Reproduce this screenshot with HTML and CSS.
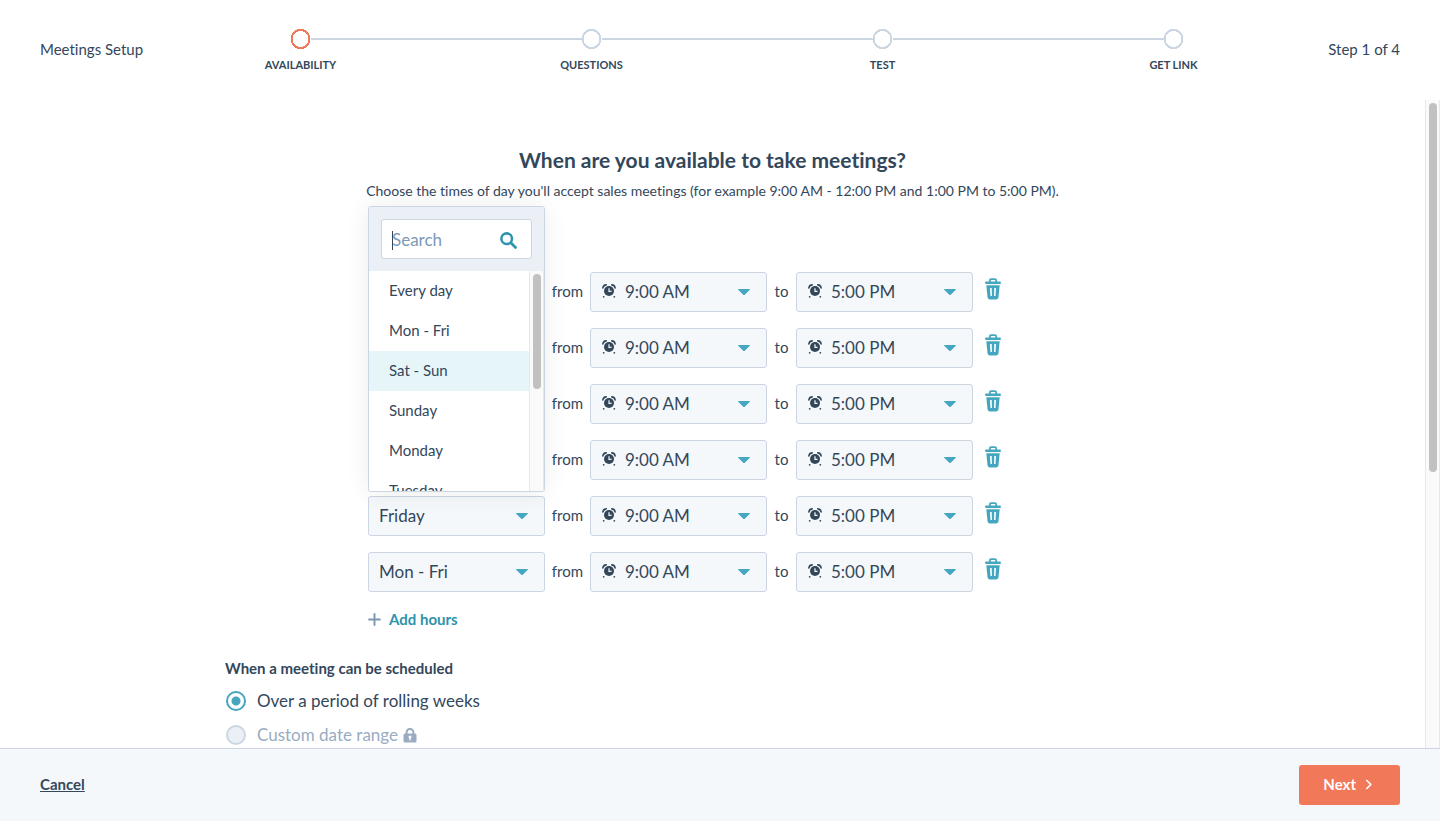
FILE: index.html
```html
<!DOCTYPE html>
<html lang="en">
<head>
<meta charset="utf-8">
<meta name="viewport" content="width=device-width, initial-scale=1">
<title>Meetings Setup</title>
<link rel="stylesheet" href="styles.css">
</head>
<body>
<svg class="sprite" aria-hidden="true">
  <symbol id="clock" viewBox="0 0 14 14">
    <circle cx="7" cy="7" r="5" fill="currentColor"/>
    <path d="M.9 4C1.100 2.200 2.400 1 4.200.9M13.100 4C12.900 2.200 11.600 1 9.800.9" fill="none" stroke="currentColor" stroke-width="1.600" stroke-linecap="round"/>
    <path d="M7 4.200v3.200h2.600" fill="none" stroke="#f5f8fa" stroke-width="1.200"/>
    <circle cx="1.700" cy="12.800" r=".9" fill="currentColor"/><circle cx="12.300" cy="12.800" r=".9" fill="currentColor"/>
  </symbol>
  <symbol id="caret" viewBox="0 0 12 6"><path d="M.6 0h10.8c.5 0 .7.5.4.8L7 5.600a1.400 1.400 0 0 1-2 0L.2.8C-.1.5.1 0 .6 0z" fill="currentColor"/></symbol>
  <symbol id="trash" viewBox="0 0 16 22">
    <path d="M4.800 4V2.600A1.400 1.400 0 0 1 6.200 1.200h3.600a1.400 1.400 0 0 1 1.400 1.400V4" fill="none" stroke="currentColor" stroke-width="1.800"/>
    <rect x="0" y="3.400" width="16" height="2.600" rx="1.300" fill="currentColor"/>
    <path fill-rule="evenodd" d="M1.300 7.200h13.400l-1.200 12.100a2.300 2.300 0 0 1-2.300 2.100H4.800a2.300 2.300 0 0 1-2.300-2.100zM5 9.900l.5 8h1.500l-.3-8zm4.300 0-.3 8h1.500l.5-8z" fill="currentColor"/>
  </symbol>
</svg>

<header class="header">
  <span class="header-title">Meetings Setup</span>
  <ol class="steps">
    <li class="step is-active"><span class="dot"></span>Availability</li>
    <li class="step"><span class="dot"></span>Questions</li>
    <li class="step"><span class="dot"></span>Test</li>
    <li class="step"><span class="dot"></span>Get link</li>
  </ol>
  <span class="header-count">Step 1 of 4</span>
</header>

<div class="viewport">
  <main class="content">
    <h1 class="title">When are you available to take meetings?</h1>
    <p class="lead">Choose the times of day you'll accept sales meetings (for example 9:00 AM - 12:00 PM and 1:00 PM to 5:00 PM).</p>

    <form class="form">
      <div class="hours">
        <div class="row">
          <div class="field"><select class="select" aria-label="Day"><option>Monday</option></select><svg class="caret"><use href="#caret"/></svg></div>
          <span class="word word-from">from</span>
          <div class="field"><svg class="clock"><use href="#clock"/></svg><select class="select" aria-label="Start time"><option>9:00 AM</option></select><svg class="caret"><use href="#caret"/></svg></div>
          <span class="word word-to">to</span>
          <div class="field"><svg class="clock"><use href="#clock"/></svg><select class="select" aria-label="End time"><option>5:00 PM</option></select><svg class="caret"><use href="#caret"/></svg></div>
          <button class="remove" type="button" aria-label="Remove hours"><svg class="trash"><use href="#trash"/></svg></button>
        </div>
        <div class="row">
          <div class="field"><select class="select" aria-label="Day"><option>Tuesday</option></select><svg class="caret"><use href="#caret"/></svg></div>
          <span class="word word-from">from</span>
          <div class="field"><svg class="clock"><use href="#clock"/></svg><select class="select" aria-label="Start time"><option>9:00 AM</option></select><svg class="caret"><use href="#caret"/></svg></div>
          <span class="word word-to">to</span>
          <div class="field"><svg class="clock"><use href="#clock"/></svg><select class="select" aria-label="End time"><option>5:00 PM</option></select><svg class="caret"><use href="#caret"/></svg></div>
          <button class="remove" type="button" aria-label="Remove hours"><svg class="trash"><use href="#trash"/></svg></button>
        </div>
        <div class="row">
          <div class="field"><select class="select" aria-label="Day"><option>Wednesday</option></select><svg class="caret"><use href="#caret"/></svg></div>
          <span class="word word-from">from</span>
          <div class="field"><svg class="clock"><use href="#clock"/></svg><select class="select" aria-label="Start time"><option>9:00 AM</option></select><svg class="caret"><use href="#caret"/></svg></div>
          <span class="word word-to">to</span>
          <div class="field"><svg class="clock"><use href="#clock"/></svg><select class="select" aria-label="End time"><option>5:00 PM</option></select><svg class="caret"><use href="#caret"/></svg></div>
          <button class="remove" type="button" aria-label="Remove hours"><svg class="trash"><use href="#trash"/></svg></button>
        </div>
        <div class="row">
          <div class="field"><select class="select" aria-label="Day"><option>Thursday</option></select><svg class="caret"><use href="#caret"/></svg></div>
          <span class="word word-from">from</span>
          <div class="field"><svg class="clock"><use href="#clock"/></svg><select class="select" aria-label="Start time"><option>9:00 AM</option></select><svg class="caret"><use href="#caret"/></svg></div>
          <span class="word word-to">to</span>
          <div class="field"><svg class="clock"><use href="#clock"/></svg><select class="select" aria-label="End time"><option>5:00 PM</option></select><svg class="caret"><use href="#caret"/></svg></div>
          <button class="remove" type="button" aria-label="Remove hours"><svg class="trash"><use href="#trash"/></svg></button>
        </div>
        <div class="row">
          <div class="field">
            <select class="select" aria-label="Day"><option>Friday</option></select><svg class="caret"><use href="#caret"/></svg>
            <div class="menu">
              <div class="menu-head">
                <div class="search">
                  <span class="cursor"></span>
                  <input class="search-input" type="text" placeholder="Search" aria-label="Search">
                  <svg class="search-icon" viewBox="0 0 16 16"><circle cx="6.300" cy="6.300" r="5" fill="none" stroke="currentColor" stroke-width="2.400"/><path d="M10.200 10.200l4.400 4.400" stroke="currentColor" stroke-width="2.600" stroke-linecap="round"/></svg>
                </div>
              </div>
              <div class="menu-body">
                <ul class="options">
                  <li><button class="option" type="button">Every day</button></li>
                  <li><button class="option" type="button">Mon - Fri</button></li>
                  <li><button class="option is-hovered" type="button">Sat - Sun</button></li>
                  <li><button class="option" type="button">Sunday</button></li>
                  <li><button class="option" type="button">Monday</button></li>
                  <li><button class="option" type="button">Tuesday</button></li>
                </ul>
                <div class="track"><div class="thumb thumb-menu"></div></div>
              </div>
            </div>
          </div>
          <span class="word word-from">from</span>
          <div class="field"><svg class="clock"><use href="#clock"/></svg><select class="select" aria-label="Start time"><option>9:00 AM</option></select><svg class="caret"><use href="#caret"/></svg></div>
          <span class="word word-to">to</span>
          <div class="field"><svg class="clock"><use href="#clock"/></svg><select class="select" aria-label="End time"><option>5:00 PM</option></select><svg class="caret"><use href="#caret"/></svg></div>
          <button class="remove" type="button" aria-label="Remove hours"><svg class="trash"><use href="#trash"/></svg></button>
        </div>
        <div class="row">
          <div class="field"><select class="select" aria-label="Day"><option>Mon - Fri</option></select><svg class="caret"><use href="#caret"/></svg></div>
          <span class="word word-from">from</span>
          <div class="field"><svg class="clock"><use href="#clock"/></svg><select class="select" aria-label="Start time"><option>9:00 AM</option></select><svg class="caret"><use href="#caret"/></svg></div>
          <span class="word word-to">to</span>
          <div class="field"><svg class="clock"><use href="#clock"/></svg><select class="select" aria-label="End time"><option>5:00 PM</option></select><svg class="caret"><use href="#caret"/></svg></div>
          <button class="remove" type="button" aria-label="Remove hours"><svg class="trash"><use href="#trash"/></svg></button>
        </div>
        <button class="add" type="button"><svg class="plus" viewBox="0 0 12 12"><path d="M6 1v10M1 6h10" stroke="currentColor" stroke-width="1.800" stroke-linecap="round"/></svg>Add hours</button>
      </div>

      <fieldset class="schedule">
        <legend class="legend">When a meeting can be scheduled</legend>
        <label class="choice"><input class="radio" type="radio" name="window" checked>Over a period of rolling weeks</label>
        <label class="choice is-disabled"><input class="radio" type="radio" name="window" disabled>Custom date range
          <svg class="lock" viewBox="0 0 14 15"><path d="M3.600 7V4.300a3.400 3.400 0 0 1 6.800 0V7" fill="none" stroke="currentColor" stroke-width="2"/><rect x=".5" y="5.500" width="13" height="9" rx="1.500" fill="currentColor"/><circle cx="7" cy="9" r="1.500" fill="#fff"/><path d="M7 9v3.500" stroke="#fff" stroke-width="1.300"/></svg></label>
      </fieldset>
    </form>
  </main>
  <div class="track track-page"><div class="thumb thumb-page"></div></div>
</div>

<footer class="footer">
  <a class="cancel" href="#">Cancel</a>
  <button class="next" type="button">Next<svg class="chevron" viewBox="0 0 8 12"><path d="M1.800 2.500l4 4-4 4" fill="none" stroke="currentColor" stroke-width="1.700" stroke-linecap="round" stroke-linejoin="round"/></svg></button>
</footer>
</body>
</html>
```
FILE: styles.css
```css
* { box-sizing: border-box; }

body {
  margin: 0;
  height: 100vh;
  display: flex;
  flex-direction: column;
  background: #fff;
  color: #33475b;
  font-family: Lato, "Liberation Sans", sans-serif;
  font-size: 15px;
  line-height: 20px;
  font-variant-ligatures: none;
}

button, input, select { font: inherit; color: inherit; margin: 0; }
button { border: 0; padding: 0; background: none; cursor: pointer; }
svg { flex: none; display: block; }
.sprite { position: absolute; width: 0; height: 0; }

.header {
  flex: none;
  height: 100px;
  padding: 0 40px 2px;
  display: grid;
  grid-template-columns: 102px 1fr 68px;
  column-gap: 13px;
  align-items: center;
  white-space: nowrap;
}
.header-count { justify-self: end; }
.steps {
  margin: 0;
  padding: 4px 0 0;
  list-style: none;
  display: grid;
  grid-template-columns: repeat(4, 1fr);
}
.step {
  display: flex;
  flex-direction: column;
  align-items: center;
  gap: 8px;
  font-size: 11px;
  line-height: 16px;
  font-weight: 700;
  text-transform: uppercase;
}
.dot {
  align-self: stretch;
  display: grid;
  grid-template-columns: 1fr 20px 1fr;
  align-items: center;
  height: 20px;
  background: radial-gradient(circle closest-side at center, transparent 8px, #cbd6e2 8px, #cbd6e2 10px, transparent 10px);
}
.dot::before, .dot::after { content: ""; height: 2px; background: #cbd6e2; }
.dot::after { grid-column: 3; }
.is-active .dot { background: radial-gradient(circle closest-side at center, transparent 8px, #f2785a 8px, #f2785a 10px, transparent 10px); }
.step:first-child .dot::before, .step:last-child .dot::after { background: none; }

.viewport { flex: 1; min-height: 0; display: flex; }
.content { flex: 1; min-width: 0; overflow: hidden; padding-top: 46px; }
.title {
  margin: 0;
  text-align: center;
  font-size: 21px;
  line-height: 28px;
  font-weight: 700;
}
.lead { margin: 7px 0 0; text-align: center; font-size: 14px; }

.form { max-width: 975px; margin: 71px auto 0; }
.hours {
  margin: 0 143px;
  display: flex;
  flex-direction: column;
  gap: 16px;
}
.row { display: flex; align-items: center; }
.field {
  position: relative;
  width: 177px;
  height: 40px;
  display: flex;
  align-items: center;
  padding: 0 16px 0 10px;
  border: 1px solid #cbd6e2;
  border-radius: 3px;
  background: #f5f8fa;
}
.select {
  flex: 1;
  min-width: 0;
  height: 38px;
  padding: 0;
  border: 0;
  appearance: none;
  background: none;
  font-size: 17px;
  outline: 0;
}
.clock { width: 14px; height: 14px; margin: 0 9px 2px 1px; }
.caret { width: 12px; height: 6px; color: #45a6bf; }
.word { padding-bottom: 2px; text-align: center; }
.word-from { width: 45px; }
.word-to { width: 29px; }
.remove { margin: 0 0 6px 12px; color: #45a6bf; }
.trash { width: 16px; height: 22px; }
.add {
  align-self: flex-start;
  display: flex;
  align-items: center;
  gap: 8px;
  margin-top: 1px;
  color: #2e93ad;
  font-weight: 700;
}
.plus { width: 13px; height: 13px; color: #7c98b6; }

.menu {
  position: absolute;
  z-index: 1;
  left: -1px;
  right: -1px;
  bottom: calc(100% + 5px);
  overflow: hidden;
  border: 1px solid #cbd6e2;
  border-radius: 3px;
  background: #fff;
  box-shadow: 0 1px 24px rgba(0, 0, 0, 0.08);
}
.menu-head { padding: 12px; background: #eaf0f6; }
.search {
  position: relative;
  height: 40px;
  display: flex;
  align-items: center;
  padding: 2px 14px 0 10px;
  border: 1px solid #cbd6e2;
  border-radius: 3px;
  background: #fff;
}
.search-input {
  flex: 1;
  min-width: 0;
  padding: 0;
  border: 0;
  outline: 0;
  background: none;
  font-size: 17px;
}
.search-input::placeholder { color: #7c98b6; opacity: 1; }
.search-icon { width: 17px; height: 17px; color: #2e93ad; }
.cursor {
  position: absolute;
  left: 10px;
  width: 1px;
  height: 19px;
  background: #33475b;
}
.menu-body { display: flex; height: 220px; overflow: hidden; }
.options { flex: 1; margin: 0; padding: 0; list-style: none; }
.option {
  display: block;
  width: 100%;
  height: 40px;
  padding: 0 20px 2px;
  text-align: left;
}
.is-hovered { background: #e5f5f8; }

.track {
  width: 15px;
  flex: none;
  padding: 3px;
  border: solid #e8e8e8;
  border-width: 0 1px;
  background: #fafafa;
}
.thumb { width: 8px; border-radius: 4px; background: #c1c1c1; }
.thumb-menu { height: 115px; }
.thumb-page { height: 57.5%; }

.schedule { margin: 29px 0 0; padding: 0; border: 0; }
.legend { padding: 0; font-weight: 700; }
.choice {
  display: flex;
  align-items: center;
  height: 34px;
  font-size: 17px;
}
.legend + .choice { margin-top: 6px; }
.radio {
  appearance: none;
  width: 20px;
  height: 20px;
  margin: 0 11px 0 1px;
  border: 2px solid #45a6bf;
  border-radius: 50%;
  background: #fff;
}
.radio:checked { background: radial-gradient(circle, #45a6bf 4px, #fff 5px); }
.is-disabled { color: #99acc2; }
.is-disabled .radio { border-color: #cbd6e2; background: #eaf0f6; }
.lock { width: 14px; height: 15px; margin-left: 5px; }

.footer {
  flex: none;
  height: 73px;
  padding: 0 40px;
  display: flex;
  align-items: center;
  justify-content: space-between;
  border-top: 1px solid #cbd6e2;
  background: #f5f8fa;
  font-weight: 700;
}
.cancel { padding-bottom: 2px; color: inherit; text-decoration: underline; }
.next {
  display: flex;
  align-items: center;
  gap: 9px;
  height: 40px;
  padding: 0 27px 2px 24px;
  border-radius: 3px;
  background: #f2785a;
  color: #fff;
}
.chevron { width: 8px; height: 12px; }
```
